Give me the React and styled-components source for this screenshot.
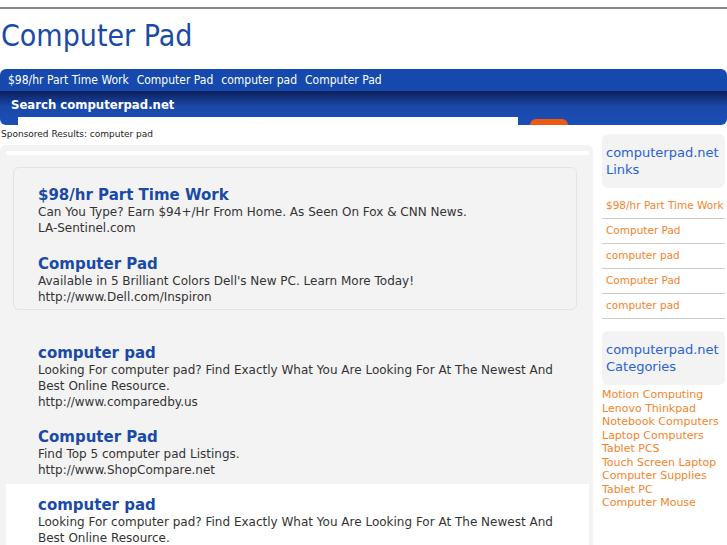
import React from "react";
import styled, { createGlobalStyle } from "styled-components";

const G = createGlobalStyle`
  html,body{margin:0;padding:0;background:#fff;font-family:"DejaVu Sans",sans-serif;overflow:hidden;}
`;
const Top = styled.div`height:7px;border-bottom:2px solid #888;`;
const Title = styled.h1`margin:0;height:60px;font:normal 30px/54px "DejaVu Sans Condensed","DejaVu Sans",sans-serif;color:#1a4aa8;padding-left:1px;`;
const Nav = styled.div`background:#1549ae;height:22px;border-radius:6px 6px 0 0;display:flex;gap:8px;padding-left:8px;align-items:center;
  font:12px "DejaVu Sans Condensed","DejaVu Sans",sans-serif;color:#fff;`;
const Band = styled.div`height:34px;background:linear-gradient(#0c1f5a 0%,#1a48a8 45%,#1a4fb8 100%);border-radius:0 0 6px 6px;position:relative;overflow:hidden;`;
const BandTitle = styled.div`color:#fff;font:bold 13px "DejaVu Sans Condensed","DejaVu Sans",sans-serif;padding:6px 0 0 11px;`;
const Input = styled.div`position:absolute;left:18px;top:26px;width:500px;height:12px;background:#fff;`;
const Btn = styled.div`position:absolute;left:530px;top:28px;width:38px;height:12px;border-radius:6px;background:#f05a10;`;
const Spons = styled.div`font-size:9px;color:#222;padding:4px 0 0 1px;height:12px;`;
const Body = styled.div`display:flex;gap:9px;margin-top:4px;align-items:flex-start;`;
const Main = styled.div`width:593px;background:#f3f3f3;border-radius:6px;padding:6px 0 0;`;
const Inner = styled.div`height:4px;background:#fff;margin:0 4px 0 6px;border-radius:4px;`;
const AdBox = styled.div`margin:12px 16px 0 13px;border:1px solid #e3e3e3;border-radius:6px;padding:18px 0 4px 24px;`;
const Res = styled.div`padding:${p=>p.$pad||"0"};background:${p=>p.$bg||"transparent"};margin:${p=>p.$m||"0"};`;
const RT = styled.div`font:bold 15px/18px "DejaVu Sans",sans-serif;color:#1a4aa8;`;
const RD = styled.div`font-size:12px;line-height:16px;color:#333;`;
const Side = styled.div`width:123px;margin-top:-11px;`;
const SBox = styled.div`background:#f3f3f3;border-radius:6px;padding:10px 4px;color:#2a62d4;font-size:13px;line-height:17px;margin:${p=>p.$m};`;
const SLink = styled.div`font-size:10.5px;color:#f5842a;height:24px;line-height:22px;border-bottom:1px solid #ccc;padding-left:4px;`;
const Cat = styled.div`font-size:11px;color:#f5842a;line-height:13.5px;`;

export default function App(){
  return <>
    <G/>
    <Top/>
    <Title>Computer Pad</Title>
    <Nav><span>$98/hr Part Time Work</span><span>Computer Pad</span><span>computer pad</span><span>Computer Pad</span></Nav>
    <Band><BandTitle>Search computerpad.net</BandTitle><Input/><Btn/></Band>
    <Spons>Sponsored Results: computer pad</Spons>
    <Body>
      <Main>
        <Inner/>
        <AdBox>
          <Res $pad="0 0 19px 0"><RT>$98/hr Part Time Work</RT><RD>Can You Type? Earn $94+/Hr From Home. As Seen On Fox &amp; CNN News.</RD><RD>LA-Sentinel.com</RD></Res>
          <Res><RT>Computer Pad</RT><RD>Available in 5 Brilliant Colors Dell's New PC. Learn More Today!</RD><RD>http://www.Dell.com/Inspiron</RD></Res>
        </AdBox>
        <Res $pad="0 12px 18px 38px" $m="34px 0 0"><RT>computer pad</RT><RD>Looking For computer pad? Find Exactly What You Are Looking For At The Newest And Best Online Resource.</RD><RD>http://www.comparedby.us</RD></Res>
        <Res $pad="0 16px 6px 38px"><RT>Computer Pad</RT><RD>Find Top 5 computer pad Listings.</RD><RD>http://www.ShopCompare.net</RD></Res>
        <Res $pad="12px 8px 8px 32px" $bg="#fff" $m="0 4px 0 6px"><RT>computer pad</RT><RD>Looking For computer pad? Find Exactly What You Are Looking For At The Newest And Best Online Resource.</RD></Res>
      </Main>
      <Side>
        <SBox $m="0 0 6px">computerpad.net<br/>Links</SBox>
        {["$98/hr Part Time Work","Computer Pad","computer pad","Computer Pad","computer pad"].map((s,i)=><SLink key={i}>{s}</SLink>)}
        <SBox $m="12px 0 3px">computerpad.net<br/>Categories</SBox>
        {["Motion Computing","Lenovo Thinkpad","Notebook Computers","Laptop Computers","Tablet PCS","Touch Screen Laptop","Computer Supplies","Tablet PC","Computer Mouse"].map(s=><Cat key={s}>{s}</Cat>)}
      </Side>
    </Body>
  </>;
}
